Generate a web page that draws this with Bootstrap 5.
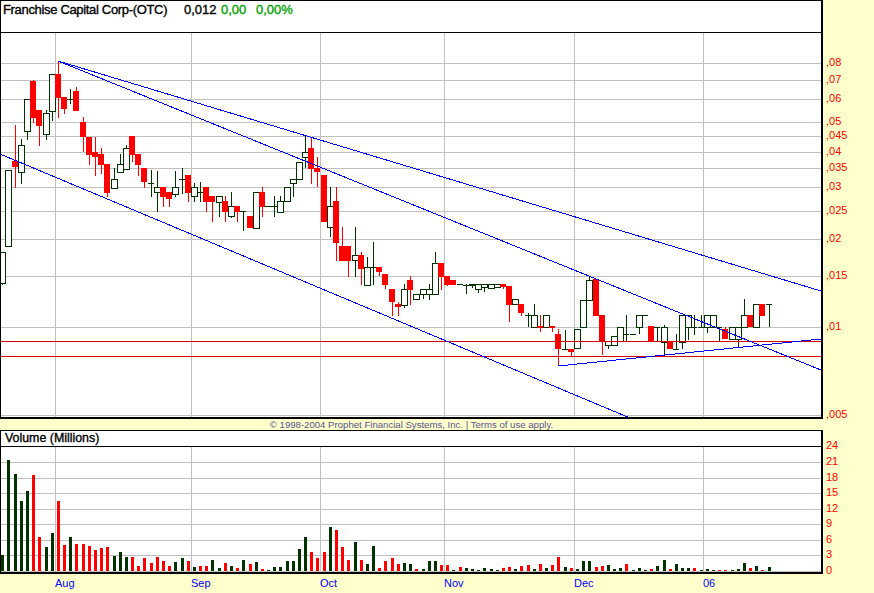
<!DOCTYPE html>
<html lang="en">

<head>
    <meta charset="UTF-8">
    <meta name="viewport" content="width=device-width, initial-scale=1.0">
    <title>Franchise Capital Corp chart</title>
    <link href="https://cdn.jsdelivr.net/npm/bootstrap@5.3.3/dist/css/bootstrap.min.css" rel="stylesheet">
    <style>
        body {
            background: #ffffcc;
            font-family: "Liberation Sans", Arial, sans-serif;
            width: 874px;
            height: 593px;
            overflow: hidden;
        }

        .panel {
            width: 823px;
            border-left: 1px solid #000;
            border-right: 2px solid #000;
            background: #fff;
        }

        .quote-bar {
            height: 33px;
            border-top: 1px solid #000;
            border-bottom: 1px solid #000;
            padding-left: 2px;
            padding-top: 1px;
            font-size: 13px;
            line-height: 15px;
            -webkit-text-stroke: 0.35px currentColor;
            color: #000;
            white-space: nowrap;
        }

        .quote-name {
            width: 181px;
            letter-spacing: -0.33px;
        }

        .quote-price {
            width: 37px;
        }

        .quote-chg {
            width: 35px;
            color: #00a000;
        }

        .quote-pct {
            color: #00a000;
        }

        .chart-row svg {
            display: block;
        }

        .price-plot {
            height: 386px;
            border-bottom: 2px solid #000;
        }

        .legal-strip {
            width: 823px;
            height: 12px;
            border-bottom: 1px solid #000;
            font-size: 9.6px;
            line-height: 11px;
            color: #55558c;
            white-space: nowrap;
        }

        .volume-head {
            height: 16px;
            border-bottom: 1px solid #000;
            padding-left: 4px;
            font-size: 12.4px;
            line-height: 15px;
            -webkit-text-stroke: 0.35px currentColor;
            color: #000;
        }

        .volume-plot {
            height: 127px;
            border-bottom: 2px solid #000;
        }

        .axis {
            width: 51px;
        }

        .axis span {
            position: absolute;
            left: 3px;
            font-size: 11px;
            line-height: 12px;
            color: #ff0000;
        }

        .month-row {
            height: 19px;
        }

        .month-row span {
            position: absolute;
            top: 3px;
            font-size: 11px;
            line-height: 13px;
            color: #0000ff;
        }
    </style>
</head>

<body>
    <div class="d-flex flex-column">
        <!-- Quote line -->
        <div class="panel quote-bar d-flex">
            <span class="quote-name">Franchise Capital Corp-(OTC)</span>
            <span class="quote-price">0,012</span>
            <span class="quote-chg">0,00</span>
            <span class="quote-pct">0,00%</span>
        </div>

        <!-- Price chart -->
        <div class="d-flex chart-row">
            <div class="panel price-plot"><svg id="priceChart" width="820" height="384" viewBox="1 33 820 384" shape-rendering="crispEdges"></svg></div>
            <div class="axis position-relative" id="priceAxis"></div>
        </div>

        <div class="legal-strip text-center">© 1998-2004 Prophet Financial Systems, Inc. | Terms of use apply.</div>

        <!-- Volume chart -->
        <div class="panel volume-head">Volume (Millions)</div>
        <div class="d-flex chart-row">
            <div class="panel volume-plot"><svg id="volumeChart" width="820" height="125" viewBox="1 447 820 125" shape-rendering="crispEdges"></svg></div>
            <div class="axis position-relative" id="volumeAxis"></div>
        </div>

        <div class="month-row position-relative" id="months"></div>
    </div>

    <script src="https://cdn.jsdelivr.net/npm/bootstrap@5.3.3/dist/js/bootstrap.bundle.min.js"></script>
    <script>
        const GREEN = '#003300', RED = '#ff0000', GRID = '#c0c0c0', BLUE = '#0000ff';
        const monthLines = [[55, 'Aug'], [191, 'Sep'], [320, 'Oct'], [444, 'Nov'], [574, 'Dec'], [703, '06']];
        const priceLines = [[63, ',08'], [80, ',07'], [99, ',06'], [122, ',05'], [136, ',045'], [152, ',04'], [168, ',035'], [187, ',03'], [211, ',025'], [239, ',02'], [276, ',015'], [327, ',01'], [415, ',005']];
        const volumeLines = [[462, '21'], [478, '18'], [493, '15'], [509, '12'], [524, '9'], [540, '6'], [555, '3']];

        // type, body top, body bottom, wick top, wick bottom (page pixels)
        // g = hollow up candle, r = filled red, d = dash only
        const candles = [
            ['g',252,283,252,285],['g',170,246,170,246],['r',161,167,125,188],['g',145,172,139,184],['g',99,131,99,140],
            ['r',81,118,80,123],['r',110,126,110,146],['g',113,134,110,140],['g',74,111,74,121],['r',74,98,62,118],
            ['r',97,109,97,114],['d',99,99,89,104],['r',91,111,87,111],['r',122,137,117,152],['r',137,155,137,165],
            ['r',152,157,137,176],['r',154,165,148,174],['r',164,193,164,197],['g',179,188,168,188],['g',164,172,154,172],
            ['g',148,169,145,169],['r',136,155,136,162],['r',154,165,154,176],['r',168,182,168,188],['d',183,183,170,197],
            ['g',187,192,171,212],['r',187,197,187,207],['r',192,199,192,207],['g',187,194,171,197],['d',179,179,168,194],
            ['r',175,193,175,202],['g',187,196,183,202],['d',192,192,182,202],['r',187,202,187,212],['r',196,202,196,222],
            ['g',196,202,196,217],['r',201,212,196,222],['g',206,216,192,218],['r',206,212,206,222],['d',211,211,211,231],
            ['r',216,228,216,228],['g',192,228,192,228],['r',192,207,187,217],['d',206,206,206,206],['d',206,206,196,217],
            ['g',201,212,196,212],['g',187,201,187,201],['g',179,183,179,197],['g',162,179,162,179],['g',152,157,135,168],
            ['r',148,169,137,184],['r',168,172,157,187],['r',175,222,175,222],['g',206,227,187,237],['r',201,243,187,261],
            ['r',246,261,227,261],['r',246,261,246,277],['g',255,260,227,277],['r',255,269,252,285],['g',267,285,257,285],
            ['d',267,267,242,285],['r',267,272,267,276],['r',274,285,274,289],['r',289,302,289,316],['r',304,307,302,316],
            ['g',289,305,284,308],['r',280,290,276,305],['g',294,299,294,299],['g',289,294,289,299],['g',289,294,284,300],
            ['g',263,294,252,294],['r',263,277,263,290],['r',276,285,276,286],['r',280,285,280,285],['d',284,284,284,284],
            ['d',285,285,284,294],['g',284,285,284,288],['g',284,289,284,293],['g',284,287,284,292],['g',284,288,284,288],
            ['g',284,287,284,288],['r',284,287,284,289],['r',286,305,286,322],['g',299,304,299,304],['r',304,313,304,316],
            ['d',315,315,313,327],['g',315,327,304,327],['r',326,328,315,332],['g',315,327,315,327],['r',326,328,326,332],
            ['r',334,349,329,365],['d',349,349,330,349],['r',349,352,349,356],['g',329,348,329,348],['g',300,327,300,327],
            ['g',280,300,277,300],['r',279,316,279,316],['r',315,341,315,355],['g',341,345,341,349],['g',336,345,336,345],
            ['g',327,341,327,341],['d',334,334,315,341],['d',334,334,334,334],['g',315,327,315,334],['d',315,315,315,315],
            ['r',326,341,326,341],['d',327,327,327,342],['g',327,342,325,356],['r',342,349,342,349],['d',349,349,334,349],
            ['g',315,342,315,349],['g',315,327,315,340],['d',327,327,315,335],['d',327,327,315,327],['g',315,327,315,333],
            ['g',315,327,315,327],['d',327,327,327,341],['r',329,339,327,339],['g',327,339,327,339],['g',327,339,327,347],
            ['g',315,327,299,327],['r',315,327,315,327],['g',304,327,304,327],['r',304,316,304,316],['d',304,304,304,327]
        ];

        // volume bar heights in pixels, g/r per day
        const volume = [
            'g16','g111','g97','g70','g80','r96','r34','g24','g38','r70','r26','g34','r27','r27','r25','r21','r23','r24','g15','g19',
            'g14','r14','r5','r13','r8','r14','r10','r5','g9','g13','r10','g4','r5','r5','g11','g3','r8','g5','r3','g11',
            'r7','g9','r2','g1','g4','g4','g10','g10','g22','g34','r19','r13','r19','g44','r41','r24','r11','g29','r11','g7',
            'g25','r3','r10','r13','r7','g8','g7','r2','g2','g10','g10','r6','r6','g1','r4','g3','g2','g1','g3','g2',
            'g1','r3','r4','g2','r5','r6','g2','r7','g3','r6','r14','g4','r3','g2','g10','g10','r4','r5','g6','g2',
            'g3','r7','g1','g3','g1','r2','g5','g11','r2','g7','g3','g3','r3','g1','g2','g1','r1','r1','g1','g2',
            'g8','r3','g5','r1','g4'
        ];

        const dayX = i => Math.round(2.3 + 6.18 * i);
        const rect = (x, y, w, h, fill) => `<rect x="${x}" y="${y}" width="${w}" height="${h}" fill="${fill}"/>`;
        const line = (x1, y1, x2, y2, color) => `<line x1="${x1}" y1="${y1}" x2="${x2}" y2="${y2}" stroke="${color}" stroke-width="1"/>`;

        function gridMarkup(top, bottom, rows) {
            let out = '';
            rows.forEach(([y]) => { out += rect(1, y, 820, 1, GRID); });
            monthLines.forEach(([x]) => { out += rect(x, top, 1, bottom - top, GRID); });
            return out;
        }

        function candleMarkup() {
            return candles.map(([type, top, bot, wickTop, wickBot], i) => {
                const x = dayX(i);
                const color = type === 'r' ? RED : GREEN;
                let out = wickBot > wickTop ? rect(x, wickTop, 1, wickBot - wickTop, color) : '';
                if (type === 'r') out += rect(x - 3, top, 6, Math.max(bot - top, 2), RED);
                if (type === 'd') out += rect(x - 3, top, 6, 1, GREEN);
                if (type === 'g') out += `<rect x="${x - 2.5}" y="${top + 0.5}" width="6" height="${bot - top}" fill="#fff" stroke="${GREEN}"/>`;
                return out;
            }).join('');
        }

        // Price chart
        let price = gridMarkup(33, 417, priceLines) + candleMarkup();
        price += rect(1, 341, 820, 1, '#d80000') + rect(1, 356, 820, 1, '#d80000');
        price += line(58, 61, 821, 291, BLUE) + line(58, 61, 821, 370, BLUE) + line(0, 154, 630, 418, BLUE) + line(558, 366, 821, 339, BLUE);
        document.getElementById('priceChart').innerHTML = price;

        // Volume chart
        let vol = gridMarkup(447, 571, volumeLines) + rect(1, 571, 820, 1, GRID);
        volume.forEach((v, i) => {
            const h = Number(v.slice(1));
            vol += rect(dayX(i) - 1, 571 - h, 3, h, v[0] === 'r' ? RED : GREEN);
        });
        document.getElementById('volumeChart').innerHTML = vol;

        // Axis labels
        function axisLabels(el, offset, rows) {
            el.innerHTML = rows.map(([y, text]) => `<span style="top:${y - offset - 7}px">${text}</span>`).join('');
        }
        axisLabels(document.getElementById('priceAxis'), 33, priceLines);
        axisLabels(document.getElementById('volumeAxis'), 447, [[446, '24'], ...volumeLines, [571, '0']]);

        document.getElementById('months').innerHTML = monthLines.map(([x, text]) => `<span style="left:${x}px">${text}</span>`).join('');
    </script>
</body>

</html>
